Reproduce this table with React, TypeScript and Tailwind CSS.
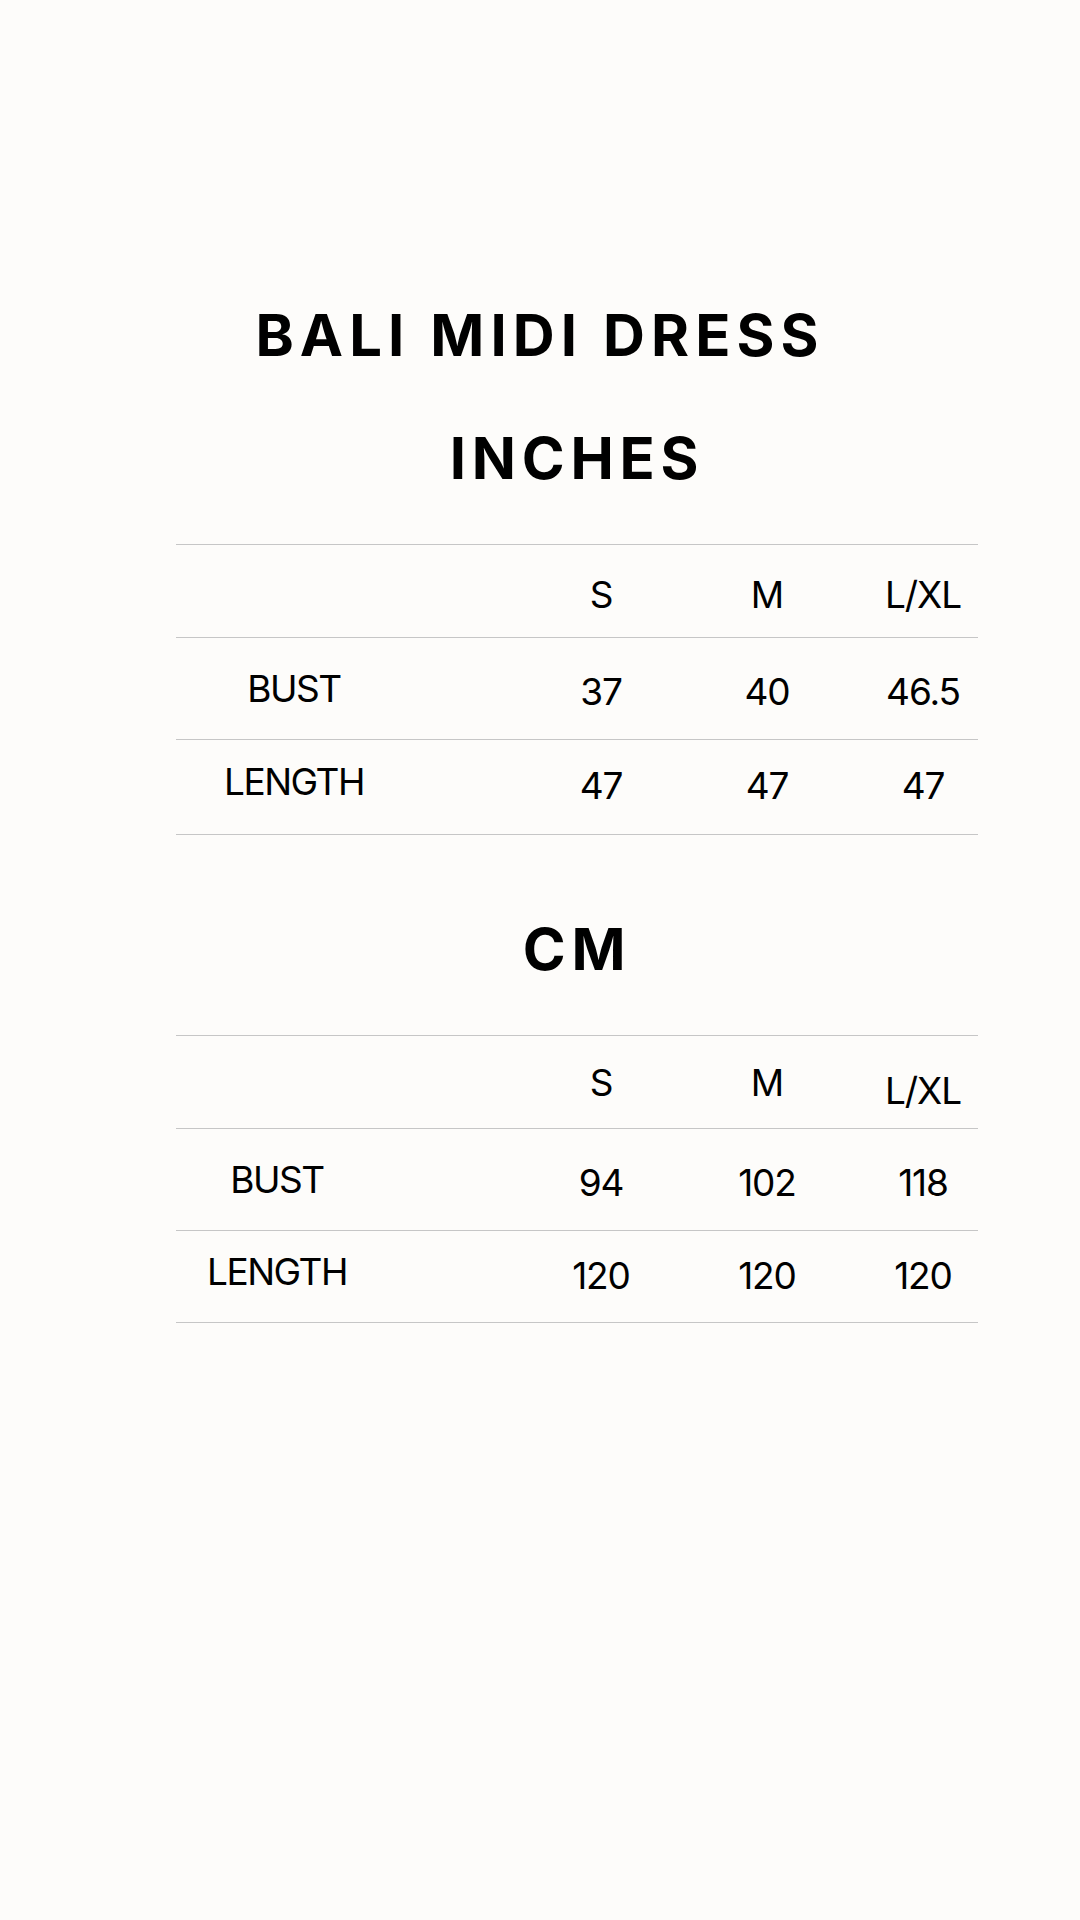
const tables = [
  {
    unit: "INCHES",
    labelPad: "pr-[124px]",
    headPad: ["pt-[6px]", "pt-[6px]", "pt-[6px]"],
    lastRow: "h-[95px]",
    rows: [
      { label: "BUST", values: ["37", "40", "46.5"] },
      { label: "LENGTH", values: ["47", "47", "47"] },
    ],
  },
  {
    unit: "CM",
    labelPad: "pr-[158px]",
    headPad: ["pt-0", "pt-0", "pt-[17px]"],
    lastRow: "h-[92px]",
    rows: [
      { label: "BUST", values: ["94", "102", "118"] },
      { label: "LENGTH", values: ["120", "120", "120"] },
    ],
  },
];

const sizes = ["S", "M", "L/XL"];

const rowGrid = "grid grid-cols-[360px_130px_202px_110px] items-center border-b border-[#c6c6c6]";

const SizeTable = ({ unit, labelPad, headPad, lastRow, rows }: (typeof tables)[number]) => {
  return (
    <div>
      <h2 className="text-center text-[58px] leading-[58px] font-bold tracking-[0.1em] text-black">
        {unit}
      </h2>
      <div className="mt-[57px] border-t border-[#c6c6c6] font-['Inter',sans-serif] text-[37px] leading-none text-black">
        <div className={`${rowGrid} h-[93px]`}>
          <div />
          {sizes.map((s, j) => (
            <div key={s} className={`text-center tracking-[-0.03em] ${headPad[j]}`}>
              {s}
            </div>
          ))}
        </div>
        {rows.map((row, i) => {
          const last = i === rows.length - 1;
          return (
            <div key={row.label} className={`${rowGrid} ${last ? lastRow : "h-[102px]"}`}>
              <div className={`text-center tracking-[-0.04em] ${labelPad} ${last ? "pb-[11px]" : ""}`}>
                {row.label}
              </div>
              {row.values.map((v, j) => (
                <div key={j} className={`text-center tracking-[-0.03em] ${last ? "pb-[3px]" : "pt-[6px]"}`}>
                  {v}
                </div>
              ))}
            </div>
          );
        })}
      </div>
    </div>
  );
};

export default function App() {
  return (
    <div className="min-h-[1920px] w-[1080px] bg-[#fdfcfa] pt-[306px] font-['Inter',sans-serif]">
      <h1 className="text-center text-[58px] leading-[58px] font-bold tracking-[0.105em] text-black">
        BALI MIDI DRESS
      </h1>
      <div className="ml-[176px] mt-[65px] w-[802px] space-y-[85px]">
        {tables.map((t) => (
          <SizeTable key={t.unit} {...t} />
        ))}
      </div>
    </div>
  );
}
